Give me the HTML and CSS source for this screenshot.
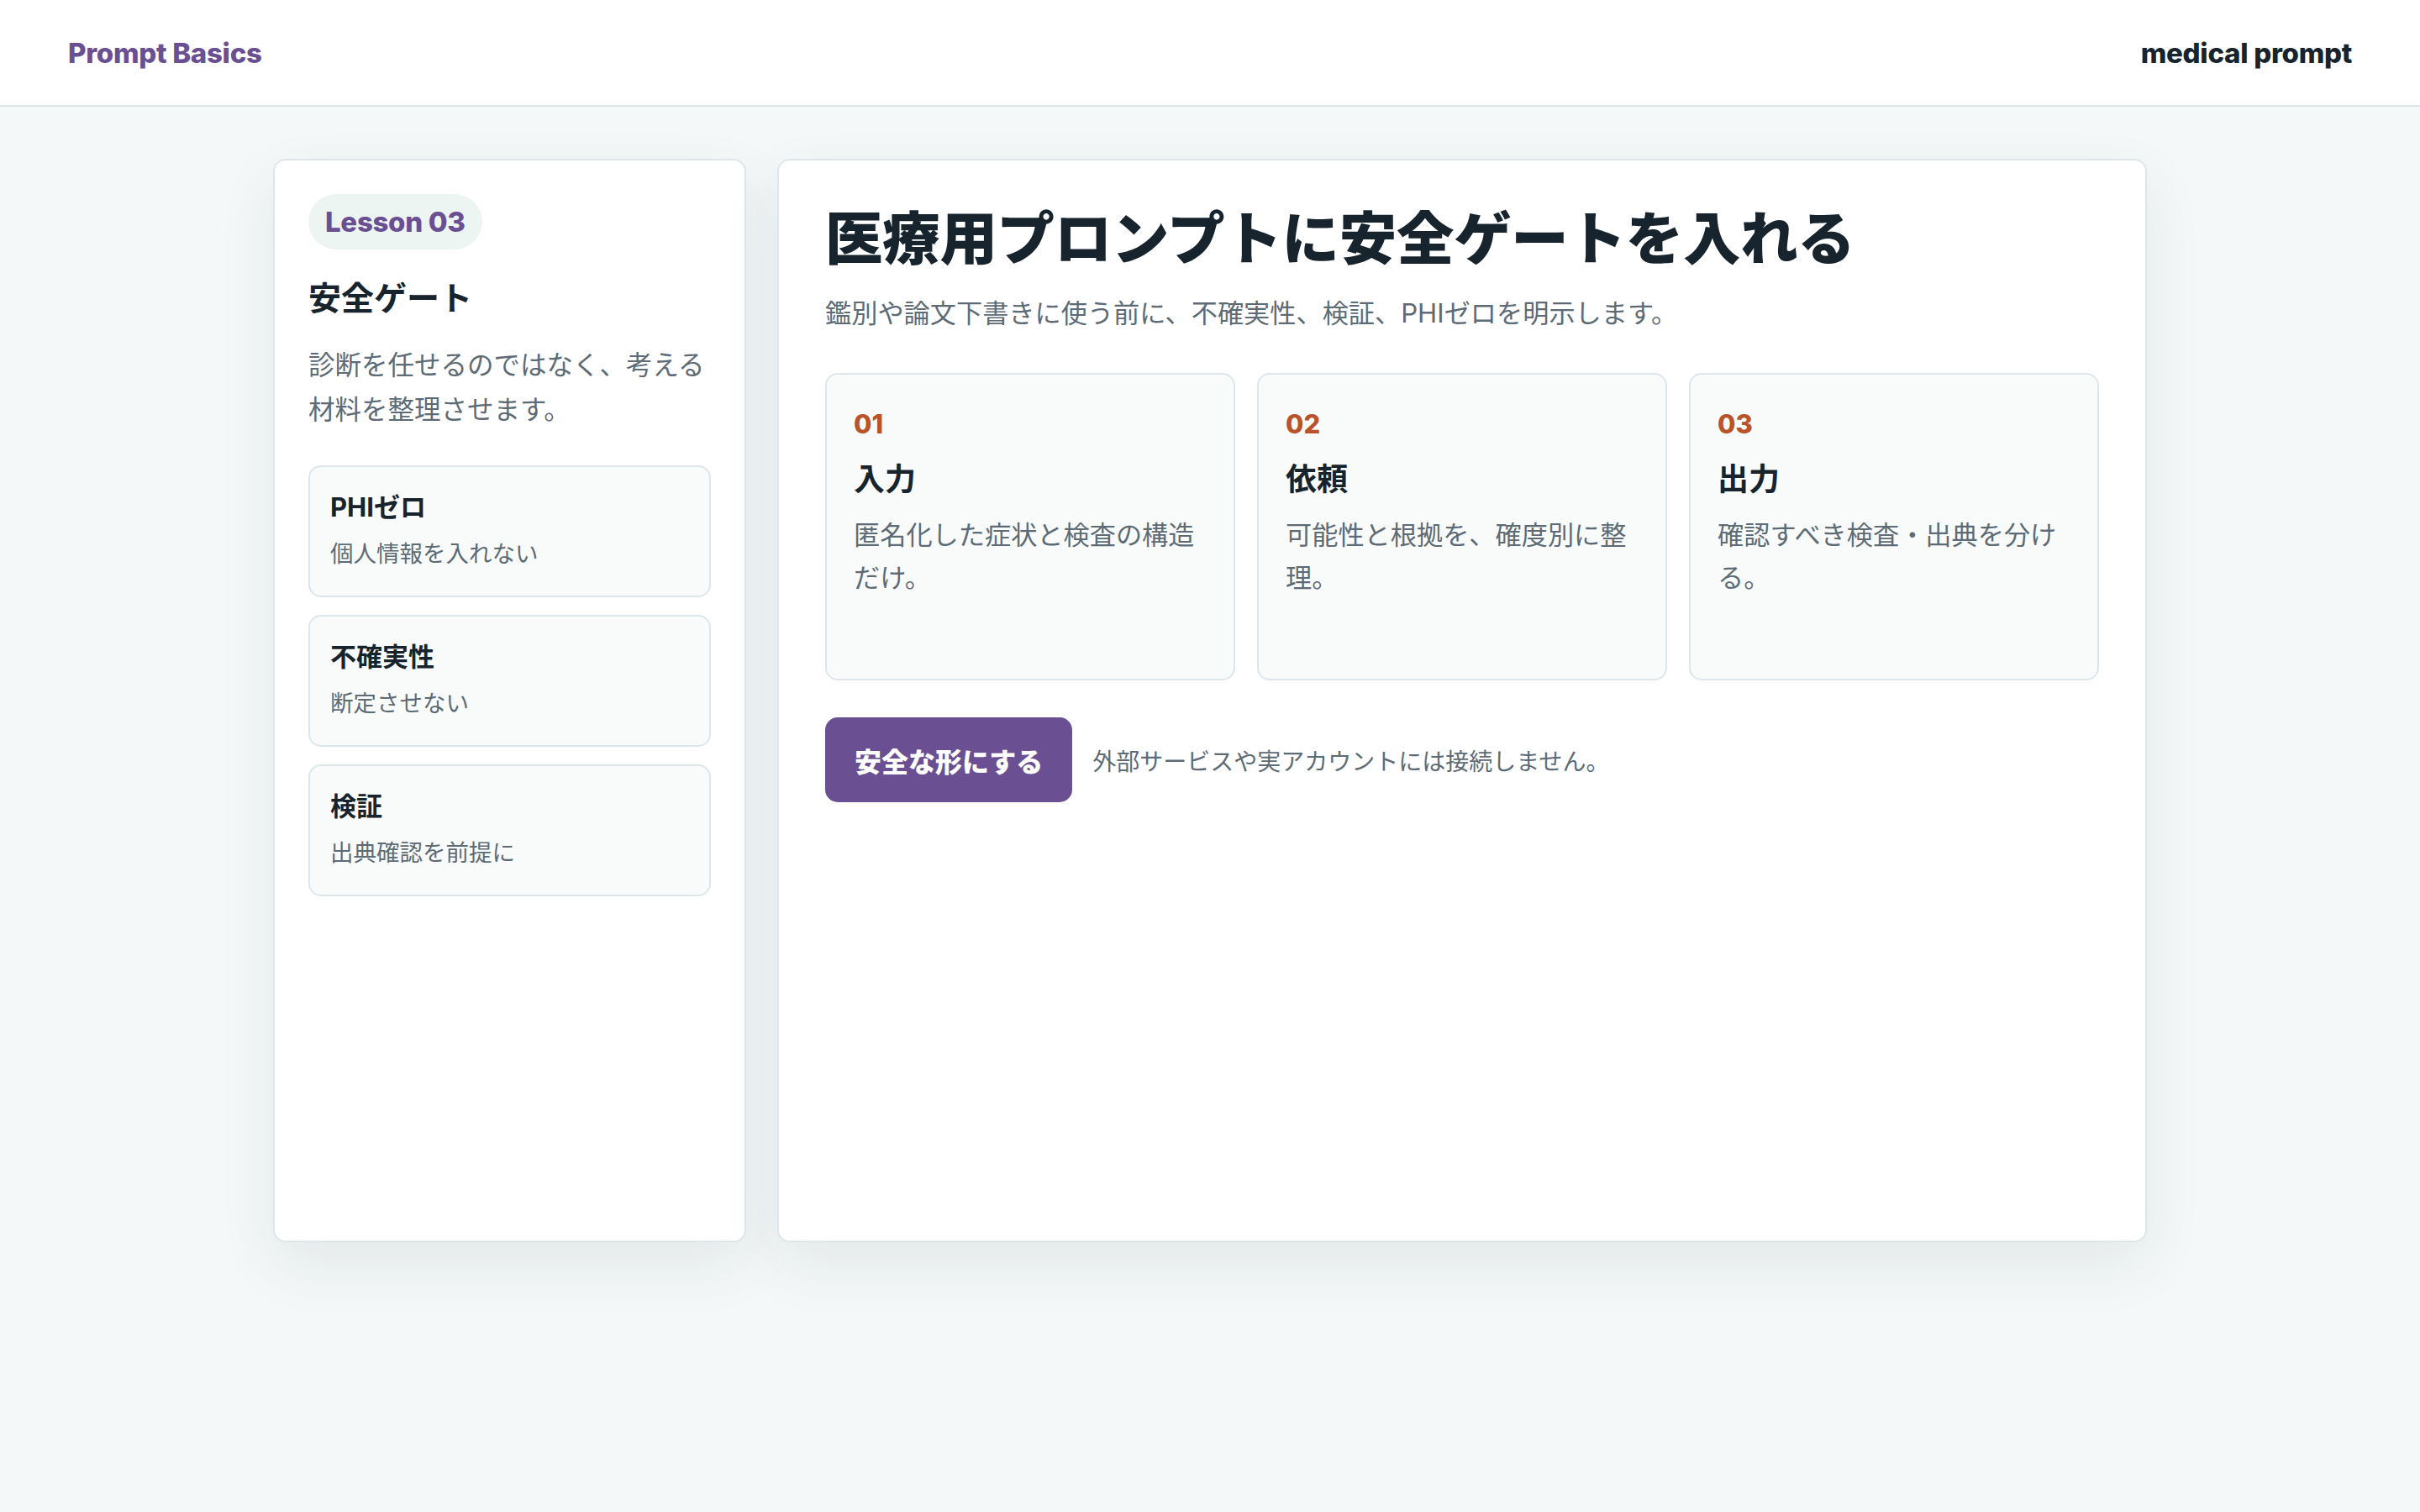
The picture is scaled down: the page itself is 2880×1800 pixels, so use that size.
FILE: index.html
```html
<!DOCTYPE html>
<html lang="ja">
<head>
<meta charset="utf-8">
<title>Prompt Basics</title>
<link rel="stylesheet" href="styles.css">
</head>
<body>
<header class="topbar">
  <div class="brand">Prompt Basics</div>
  <div class="topic">medical prompt</div>
</header>
<main class="layout">
  <aside class="side card">
    <div class="pill">Lesson 03</div>
    <h2 class="side-title">安全ゲート</h2>
    <p class="side-desc">診断を任せるのではなく、考える材料を整理させます。</p>
    <div class="rules">
      <div class="rule">
        <div class="rule-title">PHIゼロ</div>
        <div class="rule-sub">個人情報を入れない</div>
      </div>
      <div class="rule">
        <div class="rule-title">不確実性</div>
        <div class="rule-sub">断定させない</div>
      </div>
      <div class="rule">
        <div class="rule-title">検証</div>
        <div class="rule-sub">出典確認を前提に</div>
      </div>
    </div>
  </aside>
  <section class="main card">
    <h1 class="main-title">医療用プロンプトに安全ゲートを入れる</h1>
    <p class="main-sub">鑑別や論文下書きに使う前に、不確実性、検証、PHIゼロを明示します。</p>
    <div class="steps">
      <div class="step">
        <div class="step-num">01</div>
        <div class="step-title">入力</div>
        <p class="step-desc">匿名化した症状と検査の構造だけ。</p>
      </div>
      <div class="step">
        <div class="step-num">02</div>
        <div class="step-title">依頼</div>
        <p class="step-desc">可能性と根拠を、確度別に整理。</p>
      </div>
      <div class="step">
        <div class="step-num">03</div>
        <div class="step-title">出力</div>
        <p class="step-desc">確認すべき検査・出典を分ける。</p>
      </div>
    </div>
    <div class="actions">
      <button class="btn" type="button">安全な形にする</button>
      <span class="note">外部サービスや実アカウントには接続しません。</span>
    </div>
  </section>
</main>
</body>
</html>
```

FILE: styles.css
```css
* { box-sizing: border-box; }
html, body { margin: 0; padding: 0; }
body {
  font-family: Inter, "Noto Sans CJK JP", "Noto Sans", sans-serif;
  background: #f4f8f8;
  color: #18242d;
  min-height: 1800px;
}
.topbar {
  height: 127px;
  background: #ffffff;
  border-bottom: 2px solid #dbe5e8;
  display: flex;
  align-items: center;
  justify-content: space-between;
  padding: 0 81px;
}
.brand {
  font-size: 33px;
  font-weight: 800;
  color: #6a4f93;
  letter-spacing: -0.3px;
}
.topic {
  font-size: 33px;
  font-weight: 800;
  color: #18242d;
  letter-spacing: -0.3px;
}
.layout {
  width: 2230px;
  margin: 62px auto 0;
  display: flex;
  gap: 37px;
  align-items: stretch;
}
.card {
  background: #ffffff;
  border: 2px solid #dde6ea;
  border-radius: 15px;
  box-shadow: 0 26px 70px rgba(24, 44, 56, 0.08);
  min-height: 1290px;
}
.side {
  width: 563px;
  flex: none;
  padding: 40px;
}
.pill {
  display: inline-flex;
  align-items: center;
  height: 66px;
  padding: 0 20px;
  border-radius: 33px;
  background: #edf5f3;
  color: #6a4f93;
  font-size: 33px;
  font-weight: 800;
  letter-spacing: -0.3px;
}
.side-title {
  margin: 32px 0 0;
  font-size: 39px;
  line-height: 51px;
  font-weight: 700;
}
.side-desc {
  margin: 28px 0 0;
  font-size: 31.5px;
  line-height: 53px;
  color: #5d6b76;
}
.rules {
  margin-top: 40px;
  display: flex;
  flex-direction: column;
  gap: 21px;
}
.rule {
  background: #f9fbfb;
  border: 2px solid #dde6ea;
  border-radius: 15px;
  padding: 27px 24px 27px;
  display: flex;
  flex-direction: column;
  gap: 12px;
}
.rule-title {
  font-size: 31px;
  line-height: 42px;
  font-weight: 700;
}
.rule-sub {
  font-size: 27.5px;
  line-height: 45px;
  color: #5d6b76;
}
.main {
  flex: 1;
  padding: 55px;
}
.main-title {
  margin: 0;
  font-size: 68.5px;
  line-height: 78px;
  font-weight: 900;
  letter-spacing: -0.3px;
}
.main-sub {
  margin: 24px 0 0;
  font-size: 31.2px;
  line-height: 50px;
  color: #5d6b76;
}
.steps {
  margin-top: 46px;
  display: grid;
  grid-template-columns: repeat(3, 1fr);
  gap: 26px;
}
.step {
  background: #f9fbfb;
  border: 2px solid #dde6ea;
  border-radius: 15px;
  min-height: 366px;
  padding: 36px 32px 32px;
}
.step-num {
  font-size: 31px;
  line-height: 46px;
  font-weight: 800;
  color: #b9532a;
}
.step-title {
  margin-top: 17px;
  font-size: 37px;
  line-height: 52px;
  font-weight: 700;
}
.step-desc {
  margin: 15px 0 0;
  font-size: 31.2px;
  line-height: 51px;
  color: #5d6b76;
}
.actions {
  margin-top: 44px;
  display: flex;
  align-items: center;
  gap: 24px;
}
.btn {
  height: 101px;
  padding: 0 35px;
  border: none;
  border-radius: 15px;
  background: #6a4f93;
  color: #ffffff;
  font-family: "Noto Sans CJK JP", sans-serif;
  font-size: 32px;
  font-weight: 900;
}
.note {
  font-size: 28px;
  color: #5d6b76;
}
```
